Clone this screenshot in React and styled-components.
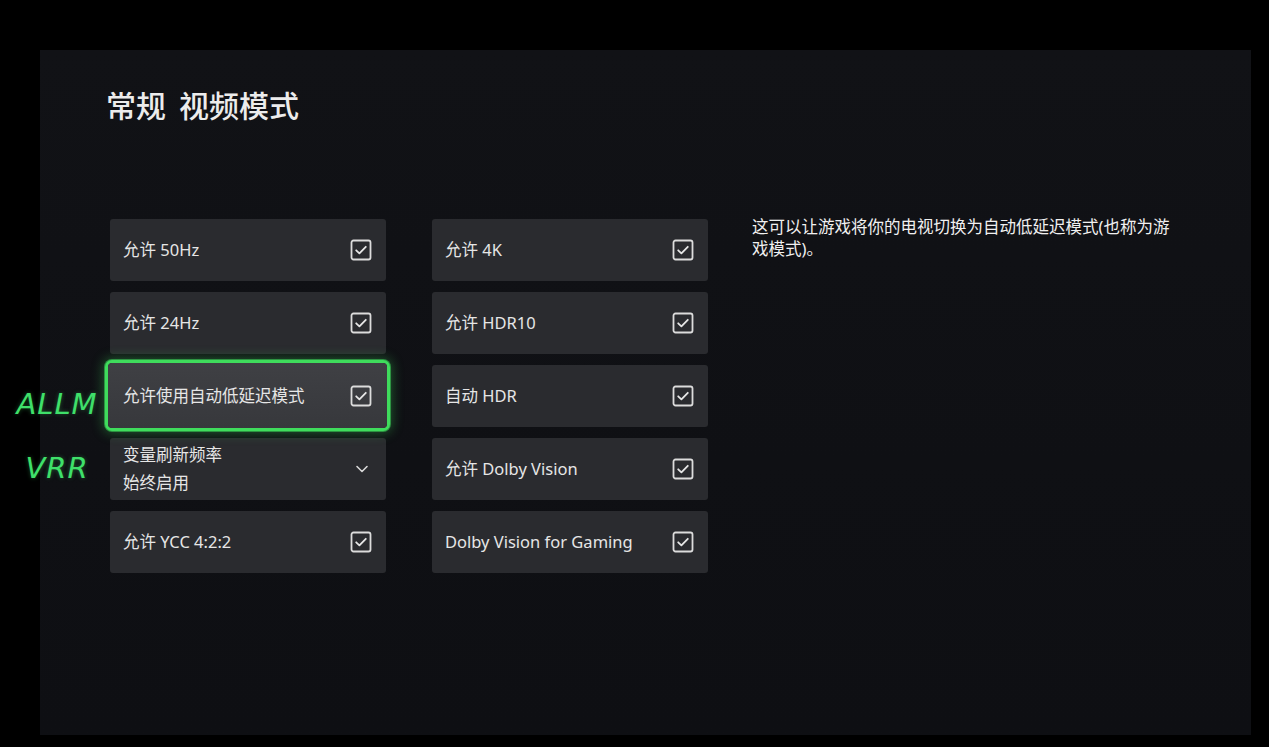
import React from "react";
import styled, { createGlobalStyle, css } from "styled-components";

const GlobalStyle = createGlobalStyle`
  html, body {
    margin: 0;
    padding: 0;
    background: #000;
  }
  body {
    font-family: "Noto Sans", "Noto Sans CJK SC", sans-serif;
  }
`;

const leftItems = [
  { label: "允许 50Hz" },
  { label: "允许 24Hz" },
  { label: "允许使用自动低延迟模式", focused: true },
  { label: "变量刷新频率", value: "始终启用", dropdown: true },
  { label: "允许 YCC 4:2:2" },
];

const rightItems = [
  { label: "允许 4K" },
  { label: "允许 HDR10" },
  { label: "自动 HDR" },
  { label: "允许 Dolby Vision" },
  { label: "Dolby Vision for Gaming" },
];

const Screen = styled.div`
  position: relative;
  width: 1269px;
  height: 747px;
  box-sizing: border-box;
  padding: 50px 18px 12px 40px;
  background: #000;
  overflow: hidden;
`;

const Panel = styled.div`
  width: 1211px;
  height: 685px;
  box-sizing: border-box;
  padding: 36px 0 0 66px;
  background: linear-gradient(180deg, #111216 0%, #0f1014 60%, #0e0f13 100%);
`;

const Title = styled.h1`
  display: flex;
  gap: 13px;
  margin: 0;
  font-size: 30px;
  line-height: 40px;
  font-weight: 500;
  color: #ececec;
`;

const Content = styled.div`
  display: flex;
  align-items: flex-start;
  margin: 93px 0 0 4px;
`;

const Grid = styled.div`
  display: grid;
  grid-template-columns: 276px 276px;
  grid-template-rows: repeat(5, 62px);
  grid-auto-flow: column;
  column-gap: 46px;
  row-gap: 11px;
`;

const Card = styled.div`
  display: flex;
  align-items: center;
  justify-content: space-between;
  box-sizing: border-box;
  padding: 0 14px 0 13px;
  border-radius: 3px;
  background: #2a2b2f;
  color: #e6e6e6;
  font-size: 16.5px;

  ${(p) =>
    p.$focused &&
    css`
      position: relative;
      z-index: 1;
      margin: -2px -1px -1px -2px;
      padding: 0 15px 0 15px;
      background: linear-gradient(180deg, #3f4044 0%, #37383c 100%);
      box-shadow: 0 0 0 3px #3fdc5c, 0 0 0 4px rgba(63, 220, 92, 0.55),
        0 0 12px 5px rgba(63, 220, 92, 0.35);
      border-radius: 4px;
    `}
`;

const Texts = styled.div`
  display: flex;
  flex-direction: column;
  line-height: 28px;
`;

const Label = styled.span`
  white-space: nowrap;
`;

const Box = styled.svg`
  flex: none;
  width: 22px;
  height: 22px;
`;

const Chevron = styled.svg`
  flex: none;
  width: 14px;
  height: 10px;
  margin-right: 3px;
`;

const Description = styled.p`
  width: 422px;
  margin: -3px 0 0 44px;
  font-size: 16.5px;
  line-height: 22px;
  color: #f0f0f0;
`;

const Annotation = styled.span`
  position: absolute;
  left: 57px;
  top: ${(p) => p.$y}px;
  transform: translate(-50%, -50%);
  font-family: "DejaVu Sans", sans-serif;
  font-style: italic;
  font-weight: 500;
  font-size: 29px;
  letter-spacing: 1px;
  color: #3fe06a;
  text-shadow: 0 0 4px rgba(63, 224, 106, 0.35);
`;

const CheckBox = () => (
  <Box viewBox="0 0 22 22">
    <rect x="1.5" y="1.5" width="19" height="19" rx="2" fill="none" stroke="#dcdcdc" strokeWidth="1.8" />
    <path d="M6.2 11.3 L9.4 14.4 L15.8 7.8" fill="none" stroke="#e6e6e6" strokeWidth="1.8" strokeLinecap="round" strokeLinejoin="round" />
  </Box>
);

const Item = ({ item }) => (
  <Card $focused={item.focused}>
    <Texts>
      <Label>{item.label}</Label>
      {item.value && <Label>{item.value}</Label>}
    </Texts>
    {item.dropdown ? (
      <Chevron viewBox="0 0 14 10">
        <path d="M2 2.5 L7 7.5 L12 2.5" fill="none" stroke="#d8d8d8" strokeWidth="1.6" strokeLinecap="round" strokeLinejoin="round" />
      </Chevron>
    ) : (
      <CheckBox />
    )}
  </Card>
);

const App = () => (
  <Screen>
    <GlobalStyle />
    <Panel>
      <Title>
        <span>常规</span>
        <span>视频模式</span>
      </Title>
      <Content>
        <Grid>
          {leftItems.concat(rightItems).map((item) => (
            <Item key={item.label} item={item} />
          ))}
        </Grid>
        <Description>
          这可以让游戏将你的电视切换为自动低延迟模式(也称为游戏模式)。
        </Description>
      </Content>
    </Panel>
    <Annotation $y={404}>ALLM</Annotation>
    <Annotation $y={468}>VRR</Annotation>
  </Screen>
);

export default App;
